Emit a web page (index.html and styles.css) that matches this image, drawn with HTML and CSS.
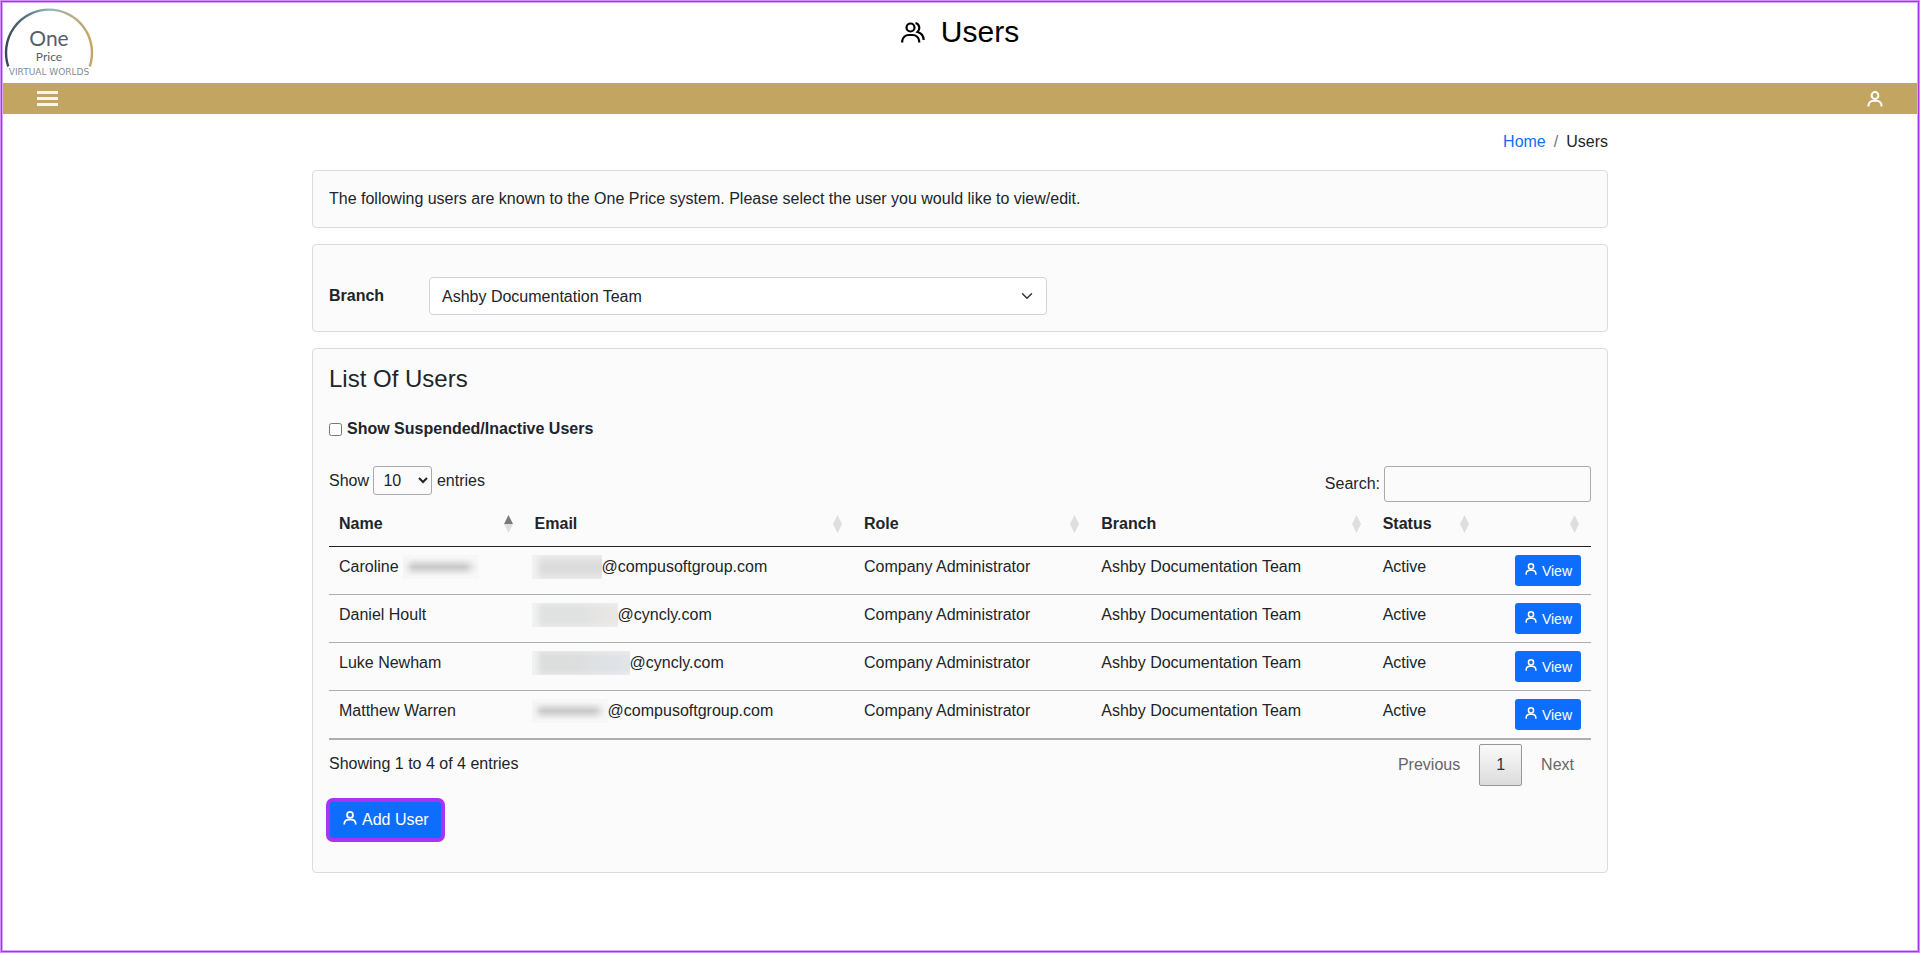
FILE: index.html
```html
<!DOCTYPE html>
<html lang="en">
<head>
  <meta charset="UTF-8" />
  <meta name="viewport" content="width=device-width, initial-scale=1.0" />
  <title>Users</title>
  <link rel="stylesheet" href="styles.css">
</head>
<body>
  <!-- shared person icon -->
  <svg class="sprite" aria-hidden="true">
    <symbol id="person" viewBox="0 0 16 16">
      <circle cx="8" cy="4.5" r="3.4" />
      <path d="M1.5 15.5v-1.2a5 5 0 0 1 5-4.5h3a5 5 0 0 1 5 4.5v1.2" />
    </symbol>
  </svg>

  <header class="header">
    <a class="logo" href="#">
      <svg width="96" height="80" viewBox="0 0 96 80" role="img" aria-label="One Price Virtual Worlds">
        <defs>
          <linearGradient id="arc" x1="0" y1="0" x2="1" y2="0">
            <stop offset="0" stop-color="#3b4650" />
            <stop offset="0.25" stop-color="#5d7a86" />
            <stop offset="0.5" stop-color="#8fb6c0" />
            <stop offset="0.75" stop-color="#b5b08a" />
            <stop offset="1" stop-color="#c3a560" />
          </linearGradient>
        </defs>
        <path d="M8.300 66.500A43 43 0 1 1 89.700 66.500" fill="none" stroke="url(#arc)" stroke-width="2.4" />
        <text class="logo-one" x="49" y="46">One</text>
        <text class="logo-price" x="49" y="61">Price</text>
        <text class="logo-sub" x="49" y="75">VIRTUAL WORLDS</text>
      </svg>
    </a>
    <h1 class="page-title">
      <svg class="icon-users" viewBox="0 0 24 21" aria-hidden="true">
        <circle cx="9.500" cy="5.500" r="4" />
        <path d="M1.200 20.500V19a6.500 6.500 0 0 1 6.500-6h4a6.500 6.500 0 0 1 6.500 6v1.500" />
        <path d="M14.500 1c4 1 5 6 2 9 4 1 6 4 6.200 8" />
      </svg>
      Users
    </h1>
  </header>

  <nav class="navbar">
    <button class="nav-btn" aria-label="Menu">
      <svg width="21" height="15" viewBox="0 0 21 15"><path class="bars" d="M0 0h21v3H0zM0 6h21v3H0zM0 12h21v3H0z" /></svg>
    </button>
    <button class="nav-btn" aria-label="Account">
      <svg class="icon"><use href="#person" /></svg>
    </button>
  </nav>

  <main class="container">
    <nav class="breadcrumb">
      <a href="#">Home</a>
      <span class="divider">/</span>
      <span>Users</span>
    </nav>

    <section class="card">
      The following users are known to the One Price system. Please select the user you would like to view/edit.
    </section>

    <section class="card branch">
      <label for="branch">Branch</label>
      <select id="branch" class="form-select">
        <option>Ashby Documentation Team</option>
      </select>
    </section>

    <section class="card users">
      <h2>List Of Users</h2>

      <div class="check">
        <input type="checkbox" id="showInactive">
        <label for="showInactive">Show Suspended/Inactive Users</label>
      </div>

      <div class="table-tools">
        <label>Show <select class="length">
          <option>10</option>
          <option>25</option>
          <option>50</option>
          <option>100</option>
        </select> entries</label>
        <label class="filter">Search:<input type="search"></label>
      </div>

      <table>
        <colgroup>
          <col class="col-name">
          <col class="col-email">
          <col class="col-role">
          <col class="col-branch">
          <col class="col-status">
          <col class="col-action">
        </colgroup>
        <thead>
          <tr>
            <th class="sorted">Name</th>
            <th>Email</th>
            <th>Role</th>
            <th>Branch</th>
            <th>Status</th>
            <th aria-label="Actions"></th>
          </tr>
        </thead>
        <tbody>
          <tr>
            <td>Caroline <span class="hidden-text surname"></span></td>
            <td><span class="hidden-text mail-a"></span>@compusoftgroup.com</td>
            <td>Company Administrator</td>
            <td>Ashby Documentation Team</td>
            <td>Active</td>
            <td class="action"><button class="btn btn-sm"><svg class="icon"><use href="#person" /></svg>View</button></td>
          </tr>
          <tr>
            <td>Daniel Hoult</td>
            <td><span class="hidden-text mail-b"></span>@cyncly.com</td>
            <td>Company Administrator</td>
            <td>Ashby Documentation Team</td>
            <td>Active</td>
            <td class="action"><button class="btn btn-sm"><svg class="icon"><use href="#person" /></svg>View</button></td>
          </tr>
          <tr>
            <td>Luke Newham</td>
            <td><span class="hidden-text mail-c"></span>@cyncly.com</td>
            <td>Company Administrator</td>
            <td>Ashby Documentation Team</td>
            <td>Active</td>
            <td class="action"><button class="btn btn-sm"><svg class="icon"><use href="#person" /></svg>View</button></td>
          </tr>
          <tr>
            <td>Matthew Warren</td>
            <td><span class="hidden-text mail-d"></span>@compusoftgroup.com</td>
            <td>Company Administrator</td>
            <td>Ashby Documentation Team</td>
            <td>Active</td>
            <td class="action"><button class="btn btn-sm"><svg class="icon"><use href="#person" /></svg>View</button></td>
          </tr>
        </tbody>
      </table>

      <div class="table-footer">
        <span class="info">Showing 1 to 4 of 4 entries</span>
        <div class="pagination">
          <button class="page">Previous</button>
          <button class="page current">1</button>
          <button class="page">Next</button>
        </div>
      </div>

      <button class="btn btn-add"><svg class="icon"><use href="#person" /></svg>Add User</button>
    </section>
  </main>
</body>
</html>
```
FILE: styles.css
```css
* {
  box-sizing: border-box;
}
body {
  margin: 0;
  min-height: 100vh;
  background: #fff;
  color: #212529;
  font-family: "Liberation Sans", Arial, sans-serif;
  font-size: 16px;
  line-height: 24px;
}
/* purple frame around the window */
body::after {
  content: "";
  position: fixed;
  inset: 0;
  border: 1px solid #d08ffa;
  box-shadow: inset 0 0 0 1px #a733f0, inset 0 0 0 2px #d9a6fb;
  pointer-events: none;
}
button, input, select {
  font-family: inherit;
  font-size: inherit;
  color: inherit;
}
button {
  cursor: pointer;
}
.sprite {
  display: none;
}
.icon {
  width: 16px;
  height: 16px;
  fill: none;
  stroke: currentColor;
  stroke-width: 2;
}

/* === header === */
.header {
  display: grid;
  grid-template-columns: 1fr auto 1fr;
  height: 83px;
}
.logo svg {
  display: block;
}
.logo text {
  font-family: Lato, sans-serif;
  text-anchor: middle;
  fill: #56606a;
}
.logo .logo-one {
  font-size: 21px;
}
.logo .logo-price {
  font-size: 12px;
}
.logo .logo-sub {
  font-family: "DejaVu Sans", sans-serif;
  font-size: 9px;
  fill: #858c93;
}
.page-title {
  display: flex;
  align-items: center;
  align-self: start;
  gap: 16px;
  margin: 15px 0 0;
  color: #000;
  font-size: 30px;
  font-weight: 400;
  line-height: 34px;
}
.icon-users {
  width: 24px;
  height: 21px;
  fill: none;
  stroke: #000;
  stroke-width: 2.2;
}
.navbar {
  display: flex;
  align-items: center;
  justify-content: space-between;
  height: 31px;
  padding: 0 37px;
  background: #c3a562;
}
.nav-btn {
  display: flex;
  padding: 0;
  border: none;
  background: none;
  color: #fff;
}
.bars {
  fill: #f5f5f5;
}

/* === page content === */
.container {
  max-width: 1320px;
  margin: 0 auto;
  padding: 16px 12px;
}
.breadcrumb {
  display: flex;
  justify-content: flex-end;
  gap: 8px;
  margin-bottom: 16px;
}
.breadcrumb a {
  color: #0d6efd;
  text-decoration: none;
}
.divider {
  color: #6c757d;
}
.card {
  margin-bottom: 16px;
  padding: 16px;
  border: 1px solid #dcdcdc;
  border-radius: 4px;
  background: #fbfbfb;
}
.branch {
  display: grid;
  grid-template-columns: 100px 49%;
  align-items: center;
  padding-top: 32px;
}
.branch label, .check label {
  font-weight: 700;
}
.form-select {
  height: 38px;
  padding: 0 36px 0 12px;
  border: 1px solid #ced4da;
  border-radius: 4px;
  appearance: none;
  background: #fff url("data:image/svg+xml,%3Csvg xmlns='http://www.w3.org/2000/svg' viewBox='0 0 16 16'%3E%3Cpath fill='none' stroke='%23343a40' stroke-linecap='round' stroke-linejoin='round' stroke-width='2' d='M2 5l6 6 6-6'/%3E%3C/svg%3E") no-repeat right 13px center / 12px 12px;
}
.users {
  padding-bottom: 33px;
}
.users h2 {
  margin: 0 0 24px;
  font-size: 24px;
  font-weight: 400;
  line-height: 28px;
}
.check {
  display: flex;
  align-items: center;
  gap: 5px;
  margin-bottom: 25px;
}
.check input {
  width: 13px;
  height: 13px;
  margin: 0;
}

/* === table === */
.table-tools {
  display: flex;
  align-items: flex-start;
  justify-content: space-between;
}
.length {
  height: 29px;
  padding: 0 5px;
  border: 1px solid #aaa;
  border-radius: 3px;
  background: transparent;
}
.filter {
  display: flex;
  align-items: center;
  gap: 4px;
}
.filter input {
  width: 207px;
  height: 36px;
  padding: 4px;
  border: 1px solid #aaa;
  border-radius: 3px;
  background: transparent;
}
table {
  width: 100%;
  table-layout: fixed;
  border-collapse: separate;
  border-spacing: 0;
  border-bottom: 1px solid #aeaeae;
}
.col-name { width: 15.5%; }
.col-email { width: 26.1%; }
.col-role { width: 18.8%; }
.col-branch { width: 22.3%; }
.col-status { width: 8.6%; }
.col-action { width: 8.7%; }
th {
  padding: 10px;
  border-bottom: 1px solid #212529;
  text-align: left;
  background: url("data:image/svg+xml,%3Csvg xmlns='http://www.w3.org/2000/svg' viewBox='0 0 9 18'%3E%3Cpath fill='%23dedede' d='M4.500 0L9 9H0zM0 9h9L4.500 18z'/%3E%3C/svg%3E") no-repeat right 12px center / 9px 18px;
}
.sorted {
  background-image: url("data:image/svg+xml,%3Csvg xmlns='http://www.w3.org/2000/svg' viewBox='0 0 9 18'%3E%3Cpath fill='%23777a7d' d='M4.500 0L9 9H0z'/%3E%3Cpath fill='%23dedede' d='M0 9h9L4.500 18z'/%3E%3C/svg%3E");
}
td {
  height: 48px;
  padding: 8px 10px;
  border-bottom: 1px solid #aeaeae;
  vertical-align: top;
}
.action {
  text-align: right;
}

/* masked names and addresses */
.hidden-text {
  display: inline-block;
  height: 24px;
  margin-left: -3px;
  vertical-align: top;
  background: #e4e4e4;
  box-shadow: inset 6px 0 6px #f3f3f3;
}
.mail-a {
  width: 70px;
  background: linear-gradient(#e6e6e6, #dcdbdc 50%, #e3e2e3);
}
.mail-b {
  width: 86px;
  background: linear-gradient(90deg, #e0e2e2 60%, #ebe8e5);
}
.mail-c {
  width: 98px;
  background: linear-gradient(90deg, #dcdddd 40%, #e1e5e9);
}
.surname, .mail-d {
  width: 76px;
  background: linear-gradient(#f8f8f8 10%, #c8c8c8 50%, #f8f8f8 90%);
  box-shadow: inset 6px 0 6px #f6f6f6, inset -8px 0 8px #f8f8f8;
}
.surname {
  margin-left: 0;
}

/* === buttons === */
.btn {
  display: inline-flex;
  align-items: center;
  gap: 4px;
  height: 38px;
  padding: 0 13px;
  border: none;
  border-radius: 4px;
  background: #0d6efd;
  color: #fff;
  vertical-align: top;
}
.btn .icon {
  height: 18px;
  padding: 0 1px 4px;
}
.btn-sm {
  height: 31px;
  padding: 0 9px;
  border-radius: 3px;
  font-size: 14px;
}
.btn-sm .icon {
  width: 14px;
  height: 16px;
}
.btn-add {
  outline: 4px solid #a733f5;
  outline-offset: -1px;
}
.table-footer {
  display: flex;
  align-items: flex-start;
  justify-content: space-between;
  margin: 4px 0 15px;
}
.info {
  margin-top: 8px;
}
.pagination {
  display: flex;
  gap: 2px;
}
.page {
  height: 42px;
  padding: 0 16px;
  border: 1px solid transparent;
  border-radius: 2px;
  background: none;
  color: #666;
}
.current {
  border-color: #979797;
  background: linear-gradient(#fafafa, #dcdcdc);
  color: #333;
}
```
